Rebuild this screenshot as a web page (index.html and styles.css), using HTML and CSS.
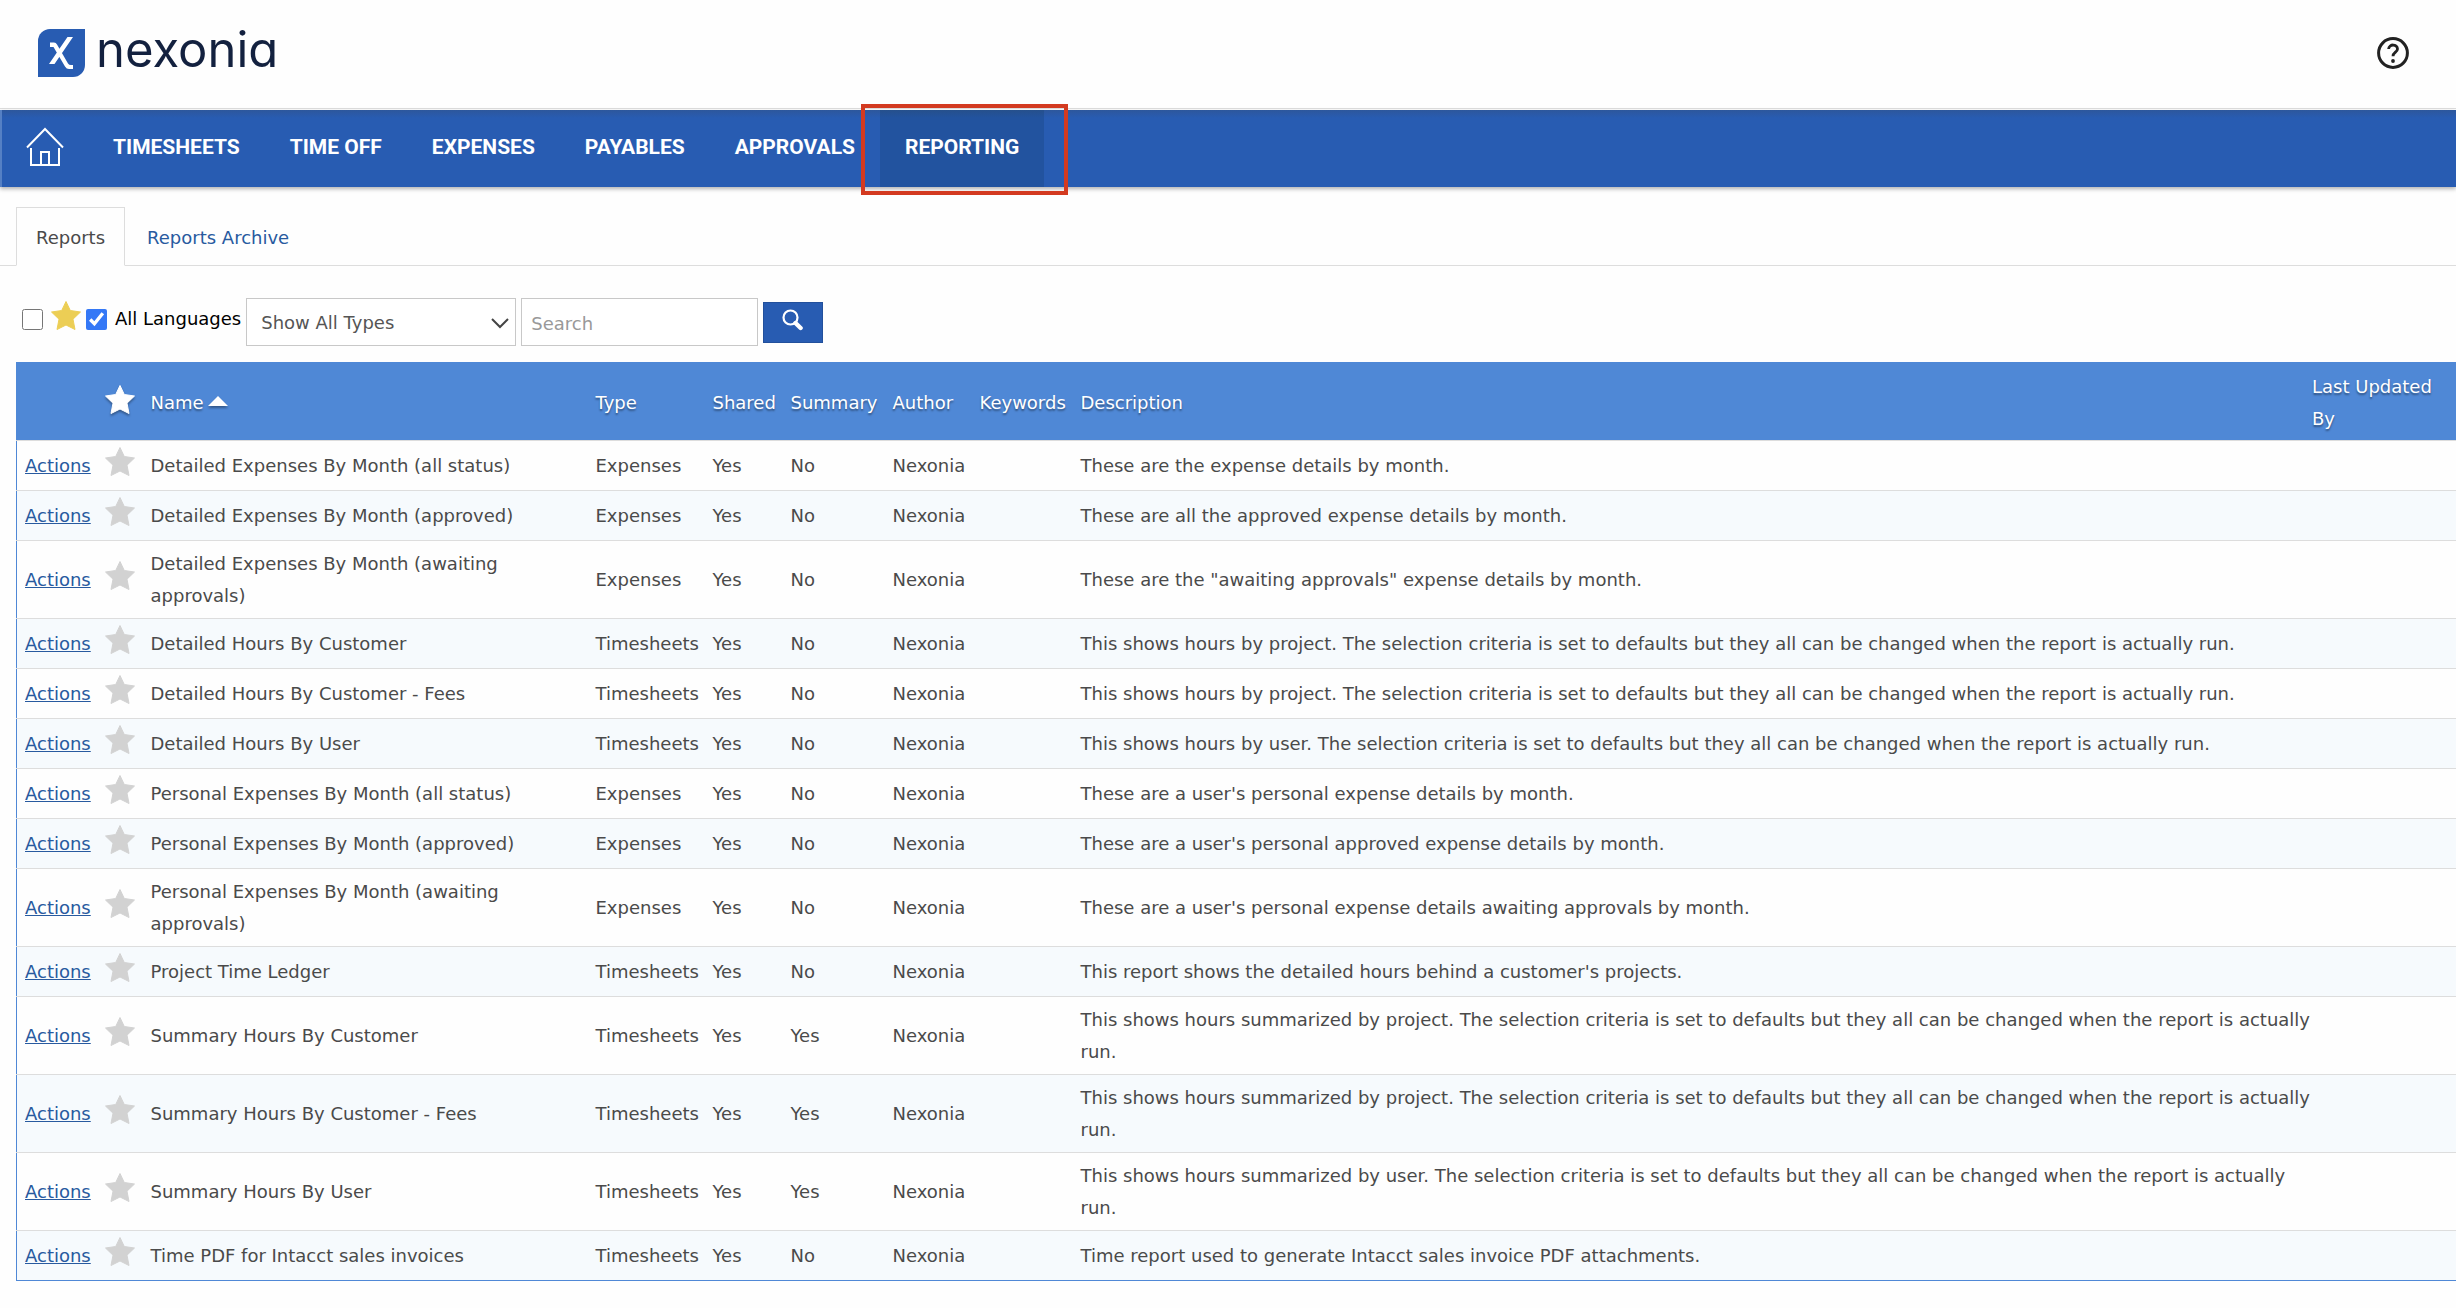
FILE: index.html
```html
<!DOCTYPE html>
<html lang="en">
<head>
  <meta charset="UTF-8" />
  <meta name="viewport" content="width=device-width, initial-scale=1.0"/>
  <title>Nexonia - Reports</title>
  <link rel="stylesheet" href="styles.css">
</head>
<body>
  <svg class="sprite" aria-hidden="true">
    <symbol id="star" viewBox="0 0 30 29">
      <path d="M15 0.500 L19.300 9.500 L29.500 11 L22 18.200 L24 28.500 L15 24 L6 28.500 L8 18.200 L0.500 11 L10.700 9.500 Z" stroke="inherit" stroke-linejoin="round"/>
    </symbol>
  </svg>

  <header class="header">
    <a href="#" class="logo">
      <svg class="logo-mark" viewBox="0 0 47 48" aria-hidden="true">
        <path d="M12 0 H47 V36 A12 12 0 0 1 35 48 H0 V12 A12 12 0 0 1 12 0 Z" fill="#285cb2"/>
        <path d="M29.500 8 H35 L16.500 35 H11 Z M12 13.500 H16 Q18 13.500 19 15.500 L30 34.500 Q31 36 33 36 H35 V40 H31 Q28.500 40 27 37.500 L15.500 18 H12 Z" fill="#fff"/>
      </svg>
      <span class="logo-text">nexonia</span>
    </a>
    <a href="#" class="help" aria-label="Help">
      <svg viewBox="0 0 32 32" aria-hidden="true">
        <circle cx="16" cy="16" r="14.4" fill="none" stroke="#222" stroke-width="3"/>
        <path d="M11.6 12 C12 6.6 20.5 6.8 20.5 12 C20.5 15 16 15.4 16 19.2" fill="none" stroke="#222" stroke-width="2.8"/>
        <circle cx="16" cy="24" r="1.9" fill="#222"/>
      </svg>
    </a>
  </header>

  <nav class="navbar">
    <a href="#" class="home" aria-label="Home">
      <svg viewBox="0 0 38 40" aria-hidden="true">
        <path d="M1 20.500 L19 2 L37 20.500 M5 21 V38 H33 V21 M15 38 V25 H23 V38" fill="none" stroke="#fff" stroke-width="2"/>
      </svg>
    </a>
    <a href="#">TIMESHEETS</a>
    <a href="#">TIME OFF</a>
    <a href="#">EXPENSES</a>
    <a href="#">PAYABLES</a>
    <a href="#">APPROVALS</a>
    <a href="#" class="active">REPORTING</a>
  </nav>

  <div class="tabs">
    <a href="#" class="tab active">Reports</a>
    <a href="#" class="tab">Reports Archive</a>
  </div>

  <main class="main">
    <form class="filters">
      <label class="check">
        <input type="checkbox" aria-label="Favorites only">
        <svg class="star gold" aria-hidden="true"><use href="#star"/></svg>
      </label>
      <label class="check"><input type="checkbox" checked> All Languages</label>
      <div class="select-box">
        <select aria-label="Report type">
          <option>Show All Types</option>
        </select>
        <svg class="chevron" viewBox="0 0 18 11" aria-hidden="true"><path d="M1 1 L9 9 L17 1" fill="none" stroke="#444" stroke-width="2"/></svg>
      </div>
      <input type="text" class="search" placeholder="Search" aria-label="Search">
      <button type="submit" class="search-btn" aria-label="Search">
        <svg viewBox="0 0 22 22" aria-hidden="true">
          <circle cx="8.500" cy="8.500" r="7" fill="none" stroke="#fff" stroke-width="2.200"/>
          <path d="M13.500 14 L18.600 19" stroke="#fff" stroke-width="4.400" stroke-linecap="round"/>
        </svg>
      </button>
    </form>

    <table class="reports">
      <colgroup>
        <col class="c-actions"><col class="c-star"><col class="c-name"><col class="c-type"><col class="c-shared">
        <col class="c-summary"><col class="c-author"><col class="c-keywords"><col><col class="c-updated">
      </colgroup>
      <thead>
        <tr>
          <th></th>
          <th><svg class="star white" role="img" aria-label="Favorite"><use href="#star"/></svg></th>
          <th><span class="sorted">Name <svg class="caret" viewBox="0 0 20 10" aria-hidden="true"><path d="M0 10 L10 0 L20 10 Z"/></svg></span></th>
          <th>Type</th>
          <th>Shared</th>
          <th>Summary</th>
          <th>Author</th>
          <th>Keywords</th>
          <th>Description</th>
          <th>Last Updated By</th>
        </tr>
      </thead>
      <tbody>
        <tr>
          <td><a href="#">Actions</a></td>
          <td><button type="button" class="fav" aria-label="Favorite"><svg class="star"><use href="#star"/></svg></button></td>
          <td>Detailed Expenses By Month (all status)</td>
          <td>Expenses</td><td>Yes</td><td>No</td><td>Nexonia</td><td></td>
          <td>These are the expense details by month.</td>
          <td></td>
        </tr>
        <tr>
          <td><a href="#">Actions</a></td>
          <td><button type="button" class="fav" aria-label="Favorite"><svg class="star"><use href="#star"/></svg></button></td>
          <td>Detailed Expenses By Month (approved)</td>
          <td>Expenses</td><td>Yes</td><td>No</td><td>Nexonia</td><td></td>
          <td>These are all the approved expense details by month.</td>
          <td></td>
        </tr>
        <tr>
          <td><a href="#">Actions</a></td>
          <td><button type="button" class="fav" aria-label="Favorite"><svg class="star"><use href="#star"/></svg></button></td>
          <td>Detailed Expenses By Month (awaiting approvals)</td>
          <td>Expenses</td><td>Yes</td><td>No</td><td>Nexonia</td><td></td>
          <td>These are the "awaiting approvals" expense details by month.</td>
          <td></td>
        </tr>
        <tr>
          <td><a href="#">Actions</a></td>
          <td><button type="button" class="fav" aria-label="Favorite"><svg class="star"><use href="#star"/></svg></button></td>
          <td>Detailed Hours By Customer</td>
          <td>Timesheets</td><td>Yes</td><td>No</td><td>Nexonia</td><td></td>
          <td>This shows hours by project. The selection criteria is set to defaults but they all can be changed when the report is actually run.</td>
          <td></td>
        </tr>
        <tr>
          <td><a href="#">Actions</a></td>
          <td><button type="button" class="fav" aria-label="Favorite"><svg class="star"><use href="#star"/></svg></button></td>
          <td>Detailed Hours By Customer - Fees</td>
          <td>Timesheets</td><td>Yes</td><td>No</td><td>Nexonia</td><td></td>
          <td>This shows hours by project. The selection criteria is set to defaults but they all can be changed when the report is actually run.</td>
          <td></td>
        </tr>
        <tr>
          <td><a href="#">Actions</a></td>
          <td><button type="button" class="fav" aria-label="Favorite"><svg class="star"><use href="#star"/></svg></button></td>
          <td>Detailed Hours By User</td>
          <td>Timesheets</td><td>Yes</td><td>No</td><td>Nexonia</td><td></td>
          <td>This shows hours by user. The selection criteria is set to defaults but they all can be changed when the report is actually run.</td>
          <td></td>
        </tr>
        <tr>
          <td><a href="#">Actions</a></td>
          <td><button type="button" class="fav" aria-label="Favorite"><svg class="star"><use href="#star"/></svg></button></td>
          <td>Personal Expenses By Month (all status)</td>
          <td>Expenses</td><td>Yes</td><td>No</td><td>Nexonia</td><td></td>
          <td>These are a user's personal expense details by month.</td>
          <td></td>
        </tr>
        <tr>
          <td><a href="#">Actions</a></td>
          <td><button type="button" class="fav" aria-label="Favorite"><svg class="star"><use href="#star"/></svg></button></td>
          <td>Personal Expenses By Month (approved)</td>
          <td>Expenses</td><td>Yes</td><td>No</td><td>Nexonia</td><td></td>
          <td>These are a user's personal approved expense details by month.</td>
          <td></td>
        </tr>
        <tr>
          <td><a href="#">Actions</a></td>
          <td><button type="button" class="fav" aria-label="Favorite"><svg class="star"><use href="#star"/></svg></button></td>
          <td>Personal Expenses By Month (awaiting approvals)</td>
          <td>Expenses</td><td>Yes</td><td>No</td><td>Nexonia</td><td></td>
          <td>These are a user's personal expense details awaiting approvals by month.</td>
          <td></td>
        </tr>
        <tr>
          <td><a href="#">Actions</a></td>
          <td><button type="button" class="fav" aria-label="Favorite"><svg class="star"><use href="#star"/></svg></button></td>
          <td>Project Time Ledger</td>
          <td>Timesheets</td><td>Yes</td><td>No</td><td>Nexonia</td><td></td>
          <td>This report shows the detailed hours behind a customer's projects.</td>
          <td></td>
        </tr>
        <tr>
          <td><a href="#">Actions</a></td>
          <td><button type="button" class="fav" aria-label="Favorite"><svg class="star"><use href="#star"/></svg></button></td>
          <td>Summary Hours By Customer</td>
          <td>Timesheets</td><td>Yes</td><td>Yes</td><td>Nexonia</td><td></td>
          <td>This shows hours summarized by project. The selection criteria is set to defaults but they all can be changed when the report is actually run.</td>
          <td></td>
        </tr>
        <tr>
          <td><a href="#">Actions</a></td>
          <td><button type="button" class="fav" aria-label="Favorite"><svg class="star"><use href="#star"/></svg></button></td>
          <td>Summary Hours By Customer - Fees</td>
          <td>Timesheets</td><td>Yes</td><td>Yes</td><td>Nexonia</td><td></td>
          <td>This shows hours summarized by project. The selection criteria is set to defaults but they all can be changed when the report is actually run.</td>
          <td></td>
        </tr>
        <tr>
          <td><a href="#">Actions</a></td>
          <td><button type="button" class="fav" aria-label="Favorite"><svg class="star"><use href="#star"/></svg></button></td>
          <td>Summary Hours By User</td>
          <td>Timesheets</td><td>Yes</td><td>Yes</td><td>Nexonia</td><td></td>
          <td>This shows hours summarized by user. The selection criteria is set to defaults but they all can be changed when the report is actually run.</td>
          <td></td>
        </tr>
        <tr>
          <td><a href="#">Actions</a></td>
          <td><button type="button" class="fav" aria-label="Favorite"><svg class="star"><use href="#star"/></svg></button></td>
          <td>Time PDF for Intacct sales invoices</td>
          <td>Timesheets</td><td>Yes</td><td>No</td><td>Nexonia</td><td></td>
          <td>Time report used to generate Intacct sales invoice PDF attachments.</td>
          <td></td>
        </tr>
      </tbody>
    </table>
  </main>
</body>
</html>
```

FILE: styles.css
```css
* {
  margin: 0;
  padding: 0;
  box-sizing: border-box;
}

body {
  font-family: Verdana, 'DejaVu Sans', sans-serif;
  font-size: 18px;
  line-height: 32px;
  background: #fefefe;
  color: #4a4a4a;
}

a {
  color: #285a9f;
}

.sprite {
  display: none;
}

.header {
  display: flex;
  justify-content: space-between;
  align-items: center;
  padding: 0 47px 2px 38px;
  height: 109px;
  border-bottom: 1px solid #ddd;
}

.logo {
  display: flex;
  align-items: center;
  gap: 11px;
  text-decoration: none;
}

.logo-mark {
  width: 47px;
  height: 48px;
}

.logo-text {
  padding-bottom: 6px;
  font-family: Inter, 'Open Sans', sans-serif;
  font-feature-settings: 'cv11';
  font-size: 49px;
  line-height: 52px;
  color: #13213f;
}

.help svg {
  display: block;
  width: 32px;
  height: 32px;
}

.navbar {
  display: flex;
  height: 77px;
  margin-top: 1px;
  background: linear-gradient(#2d579c, #285cb2 8px);
  border-left: 2px solid #5580c4;
  box-shadow: 0 2px 4px rgba(0, 0, 0, 0.3);
}

.navbar a {
  display: flex;
  align-items: center;
  padding: 0 25px 3px;
  color: #fff;
  font-family: Roboto, sans-serif;
  font-size: 21px;
  font-weight: 700;
  text-decoration: none;
}

.navbar .home {
  padding: 0 24px 4px;
}

.home svg {
  width: 38px;
  height: 40px;
}

.navbar .active {
  position: relative;
  background: linear-gradient(#26508c, #22539f 8px);
}

/* callout frame round the current section */
.navbar .active::after {
  content: "";
  position: absolute;
  top: -6px;
  right: -24px;
  bottom: -8px;
  left: -19px;
  border: 4px solid #d33a20;
}

.tabs {
  display: flex;
  padding: 20px 0 0 16px;
  border-bottom: 1px solid #ddd;
}

.tab {
  padding: 15px 22px 11px;
  text-decoration: none;
}

.tab.active {
  padding: 14px 19px 11px;
  margin-bottom: -1px;
  color: #4a4a4a;
  background: #fefefe;
  border: 1px solid #ddd;
  border-bottom-color: #fefefe;
}

.main {
  padding: 32px 0 0 16px;
}

.filters {
  display: flex;
  align-items: center;
  gap: 5px;
  margin-bottom: 16px;
  padding-left: 6px;
}

.check {
  display: flex;
  align-items: center;
  gap: 8px;
  margin-bottom: 6px;
  color: #000;
}

.check input {
  width: 21px;
  height: 21px;
  accent-color: #3478f6;
}

.star {
  display: block;
  width: 30px;
  height: 29px;
  fill: #d2d2d2;
  stroke: #d2d2d2;
}

.star.gold {
  margin-bottom: 8px;
  fill: #ecce55;
  stroke: #ecce55;
}

.select-box {
  position: relative;
  width: 270px;
}

.select-box select,
.search {
  width: 100%;
  height: 48px;
  padding: 2px 14px 0;
  font: inherit;
  color: #555;
  background: #fff;
  border: 1px solid #c8c8c8;
  border-radius: 0;
  appearance: none;
}

.search {
  width: 237px;
  padding: 2px 9px 0;
}

.search::placeholder {
  color: #999;
}

.chevron {
  position: absolute;
  top: 20px;
  right: 7px;
  width: 18px;
  height: 11px;
  pointer-events: none;
}

.search-btn {
  display: flex;
  align-items: center;
  justify-content: center;
  width: 60px;
  height: 41px;
  padding-bottom: 4px;
  background: #285cb2;
  border: 1px solid #22509c;
}

.search-btn svg {
  width: 22px;
  height: 22px;
}

.reports {
  width: 100%;
  table-layout: fixed;
  border-collapse: collapse;
  border: 1px solid #4f88d6;
  border-right: none;
}

.c-actions { width: 80px; }
.c-star { width: 46px; }
.c-name { width: 445px; }
.c-type { width: 117px; }
.c-shared { width: 78px; }
.c-summary { width: 102px; }
.c-author { width: 87px; }
.c-keywords { width: 101px; }
.c-updated { width: 144px; }

.reports th,
.reports td {
  padding: 7px 0 6px 8px;
  text-align: left;
  vertical-align: middle;
  font-weight: 400;
}

.reports td:nth-child(2) {
  padding: 0 8px;
}

.reports th {
  height: 77px;
  padding: 8px 0 5px 8px;
  color: #fff;
  background: #4f88d6;
  text-shadow: 0 2px 2px rgba(0, 0, 0, 0.4);
}

.reports th:last-child {
  padding-left: 0;
  padding-right: 16px;
}

.reports td {
  height: 50px;
  border-top: 1px solid #ddd;
}

.reports tbody tr:nth-child(even) {
  background: #f6fafd;
}

.star.white {
  margin-bottom: 8px;
  fill: #fff;
  stroke: #fff;
  filter: drop-shadow(0 2px 1px rgba(0, 0, 0, 0.35));
}

.sorted {
  display: flex;
  align-items: center;
  gap: 4px;
}

.caret {
  width: 20px;
  height: 10px;
  margin-bottom: 4px;
  fill: #fff;
  filter: drop-shadow(0 2px 1px rgba(0, 0, 0, 0.35));
}

.fav {
  display: block;
  margin-bottom: 8px;
  background: none;
  border: none;
  cursor: pointer;
}
```
